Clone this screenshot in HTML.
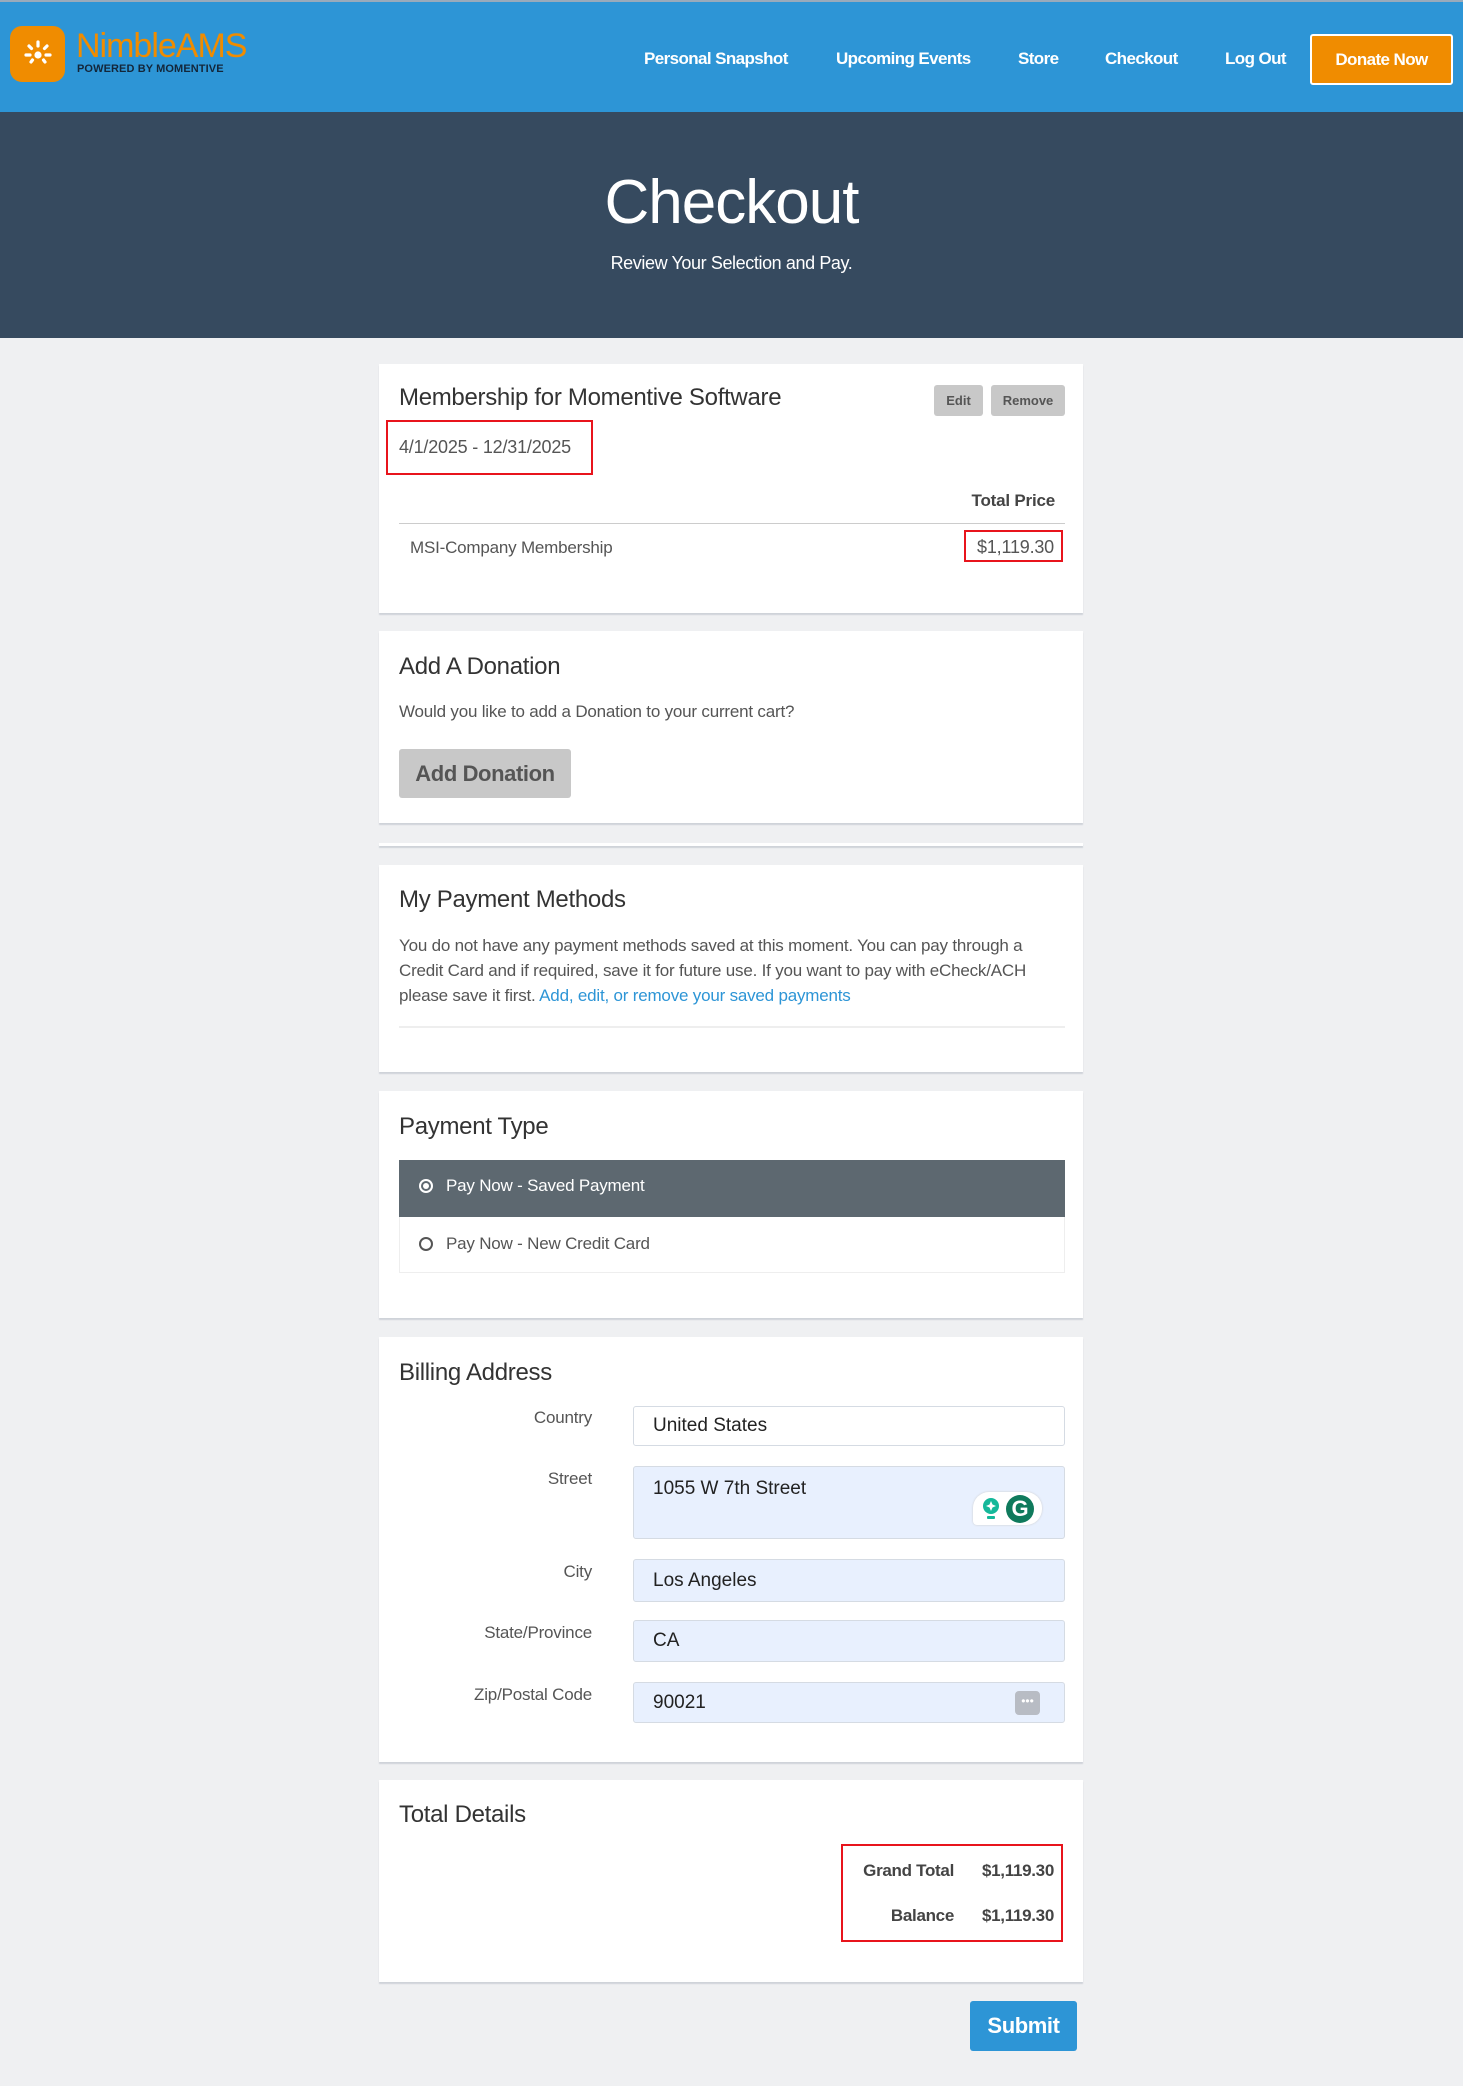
<!DOCTYPE html>
<html><head><meta charset="utf-8"><style>
*{box-sizing:border-box;margin:0;padding:0}
body{width:1463px;height:2086px;background:#eff0f2;font-family:"Liberation Sans",Arial,sans-serif;position:relative;overflow:hidden;color:#444}
.a{position:absolute}
.hdr{left:0;top:0;width:1463px;height:112px;background:#2d95d6;border-top:2px solid #9ab}
.nav{top:49px;color:#fff;font-weight:bold;font-size:17px;letter-spacing:-0.6px;line-height:20px}
.hero{left:0;top:112px;width:1463px;height:226px;background:#364a5f}
.card{left:379px;width:704px;background:#fff;box-shadow:0 2px 1px #cfd3d9}
.h{font-size:24px;color:#333;line-height:28px;left:20px;letter-spacing:-0.3px}
.t{font-size:17px;color:#555;line-height:25px;letter-spacing:-0.2px}
.lbl{font-size:17px;color:#555;text-align:right;right:491px;line-height:20px;letter-spacing:-0.2px}
.inp{left:254px;width:432px;background:#e8f0fe;border:1px solid #d5dbe3;border-radius:3px;font-size:19px;color:#222;padding-left:19px}
.red{border:2px solid #e8141c}
</style></head><body>
<div class="a hdr"></div>
<div class="a" style="left:10px;top:26px;width:55px;height:56px;background:#f08c00;border-radius:12px"></div>
<svg class="a" style="left:22px;top:38px" width="32" height="32" viewBox="0 0 32 32"><g stroke="#fff" stroke-width="3.2" stroke-linecap="round"><line x1="16" y1="4" x2="16" y2="8"/><line x1="7" y1="8" x2="9.5" y2="10.5"/><line x1="25" y1="8" x2="22.5" y2="10.5"/><line x1="4" y1="17" x2="8" y2="17"/><line x1="28" y1="17" x2="24" y2="17"/><line x1="9" y1="24" x2="10.5" y2="22"/><line x1="23" y1="24" x2="21.5" y2="22"/></g><circle cx="16" cy="17" r="3.6" fill="#fff"/></svg>
<div class="a" style="left:76px;top:27px;font-size:34px;color:#f08c00;line-height:38px;letter-spacing:-1px">NimbleAMS</div>
<div class="a" style="left:77px;top:63px;font-size:11px;font-weight:bold;color:#13263a;line-height:12px;letter-spacing:0.1px">POWERED BY MOMENTIVE</div>
<div class="a nav" style="left:644px">Personal Snapshot</div>
<div class="a nav" style="left:836px">Upcoming Events</div>
<div class="a nav" style="left:1018px">Store</div>
<div class="a nav" style="left:1105px">Checkout</div>
<div class="a nav" style="left:1225px">Log Out</div>
<div class="a" style="left:1310px;top:34px;width:143px;height:51px;background:#f08c00;border:2px solid #fff;border-radius:3px;color:#fff;font-weight:bold;font-size:17px;letter-spacing:-0.6px;text-align:center;line-height:47px">Donate Now</div>
<div class="a hero"></div>
<div class="a" style="left:0;width:1463px;top:166px;text-align:center;color:#fff;font-size:62px;line-height:74px;letter-spacing:-1px">Checkout</div>
<div class="a" style="left:0;width:1463px;top:252px;text-align:center;color:#fff;font-size:18px;line-height:22px;letter-spacing:-0.4px">Review Your Selection and Pay.</div>

<div class="a card" style="top:364px;height:249px">
 <div class="a h" style="top:20px">Membership for Momentive Software</div>
 <div class="a" style="left:555px;top:21px;width:49px;height:31px;background:#c8c8c8;border-radius:3px;font-size:13px;font-weight:bold;color:#555;text-align:center;line-height:31px">Edit</div>
 <div class="a" style="left:612px;top:21px;width:74px;height:31px;background:#c8c8c8;border-radius:3px;font-size:13px;font-weight:bold;color:#555;text-align:center;line-height:31px">Remove</div>
 <div class="a red" style="left:7px;top:56px;width:207px;height:55px"></div>
 <div class="a t" style="left:20px;top:71px;font-size:18px">4/1/2025 - 12/31/2025</div>
 <div class="a" style="right:28px;top:126px;font-size:17px;font-weight:bold;color:#444;line-height:22px;letter-spacing:-0.2px">Total Price</div>
 <div class="a" style="left:20px;top:159px;width:666px;height:1px;background:#ccc"></div>
 <div class="a t" style="left:31px;top:171px">MSI-Company Membership</div>
 <div class="a red" style="left:585px;top:166px;width:99px;height:32px"></div>
 <div class="a t" style="right:29px;top:171px;font-size:18px">$1,119.30</div>
</div>

<div class="a card" style="top:631px;height:192px">
 <div class="a h" style="top:22px">Add A Donation</div>
 <div class="a t" style="left:20px;top:68px">Would you like to add a Donation to your current cart?</div>
 <div class="a" style="left:20px;top:118px;width:172px;height:49px;background:#c8c8c8;border-radius:3px;font-size:22px;font-weight:bold;color:#555;text-align:center;line-height:49px;letter-spacing:-0.4px">Add Donation</div>
</div>

<div class="a card" style="top:843px;height:3px"></div>

<div class="a card" style="top:865px;height:207px">
 <div class="a h" style="top:21px">My Payment Methods</div>
 <div class="a t" style="left:20px;top:68px;width:670px">You do not have any payment methods saved at this moment. You can pay through a Credit Card and if required, save it for future use. If you want to pay with eCheck/ACH please save it first. <span style="color:#2d95d6">Add, edit, or remove your saved payments</span></div>
 <div class="a" style="left:20px;top:161px;width:666px;height:2px;background:#eee"></div>
</div>

<div class="a card" style="top:1091px;height:227px">
 <div class="a h" style="top:22px">Payment Type</div>
 <div class="a" style="left:20px;top:69px;width:666px;height:57px;background:#5d6870"></div>
 <div class="a" style="left:20px;top:126px;width:666px;height:56px;border:1px solid #eee;border-top:none"></div>
 <div class="a" style="left:40px;top:88px;width:14px;height:14px;border:2px solid #fff;border-radius:50%"><div style="margin:2px;width:6px;height:6px;background:#fff;border-radius:50%"></div></div>
 <div class="a t" style="left:67px;top:82px;color:#fff">Pay Now - Saved Payment</div>
 <div class="a" style="left:40px;top:146px;width:14px;height:14px;border:2px solid #555;border-radius:50%"></div>
 <div class="a t" style="left:67px;top:140px">Pay Now - New Credit Card</div>
</div>

<div class="a card" style="top:1337px;height:425px">
 <div class="a h" style="top:22px">Billing Address</div>
 <div class="a lbl" style="top:71px">Country</div>
 <div class="a inp" style="top:69px;height:40px;background:#fff;line-height:38px">United States</div>
 <div class="a lbl" style="top:132px">Street</div>
 <div class="a inp" style="top:129px;height:73px;line-height:20px;padding-top:12px">1055 W 7th Street</div>
 <div class="a" style="left:594px;top:155px;width:69px;height:33px;background:#fff;border-radius:16px 16px 16px 4px;box-shadow:0 0 2px #ccc"></div>
 <svg class="a" style="left:602px;top:160px" width="20" height="24" viewBox="0 0 20 24"><circle cx="10" cy="9" r="8" fill="#15b89a"/><path d="M10 4l1.5 3.5L15 9l-3.5 1.5L10 14l-1.5-3.5L5 9l3.5-1.5z" fill="#fff"/><rect x="6" y="19" width="8" height="3" rx="1" fill="#15b89a"/></svg>
 <div class="a" style="left:627px;top:158px;width:28px;height:28px;background:#0f7a5c;border-radius:50%;color:#fff;font-weight:bold;font-size:22px;text-align:center;line-height:28px">G</div>
 <div class="a lbl" style="top:225px">City</div>
 <div class="a inp" style="top:222px;height:43px;line-height:41px">Los Angeles</div>
 <div class="a lbl" style="top:286px">State/Province</div>
 <div class="a inp" style="top:283px;height:42px;line-height:40px">CA</div>
 <div class="a lbl" style="top:348px">Zip/Postal Code</div>
 <div class="a inp" style="top:345px;height:41px;line-height:39px">90021</div>
 <div class="a" style="left:636px;top:354px;width:25px;height:24px;background:#b8bcc4;border-radius:4px;color:#fff;font-size:12px;text-align:center;line-height:20px">•••</div>
</div>

<div class="a card" style="top:1780px;height:202px">
 <div class="a h" style="top:21px">Total Details</div>
 <div class="a red" style="left:462px;top:64px;width:222px;height:98px"></div>
 <div class="a" style="right:129px;top:80px;font-size:17px;font-weight:bold;color:#444;line-height:22px;letter-spacing:-0.3px">Grand Total</div>
 <div class="a" style="right:29px;top:80px;font-size:17px;font-weight:bold;color:#444;line-height:22px;letter-spacing:-0.3px">$1,119.30</div>
 <div class="a" style="right:129px;top:125px;font-size:17px;font-weight:bold;color:#444;line-height:22px;letter-spacing:-0.3px">Balance</div>
 <div class="a" style="right:29px;top:125px;font-size:17px;font-weight:bold;color:#444;line-height:22px;letter-spacing:-0.3px">$1,119.30</div>
</div>

<div class="a" style="left:970px;top:2001px;width:107px;height:50px;background:#2d95d6;border-radius:3px;color:#fff;font-weight:bold;font-size:22px;text-align:center;line-height:50px;letter-spacing:-0.4px">Submit</div>
</body></html>
